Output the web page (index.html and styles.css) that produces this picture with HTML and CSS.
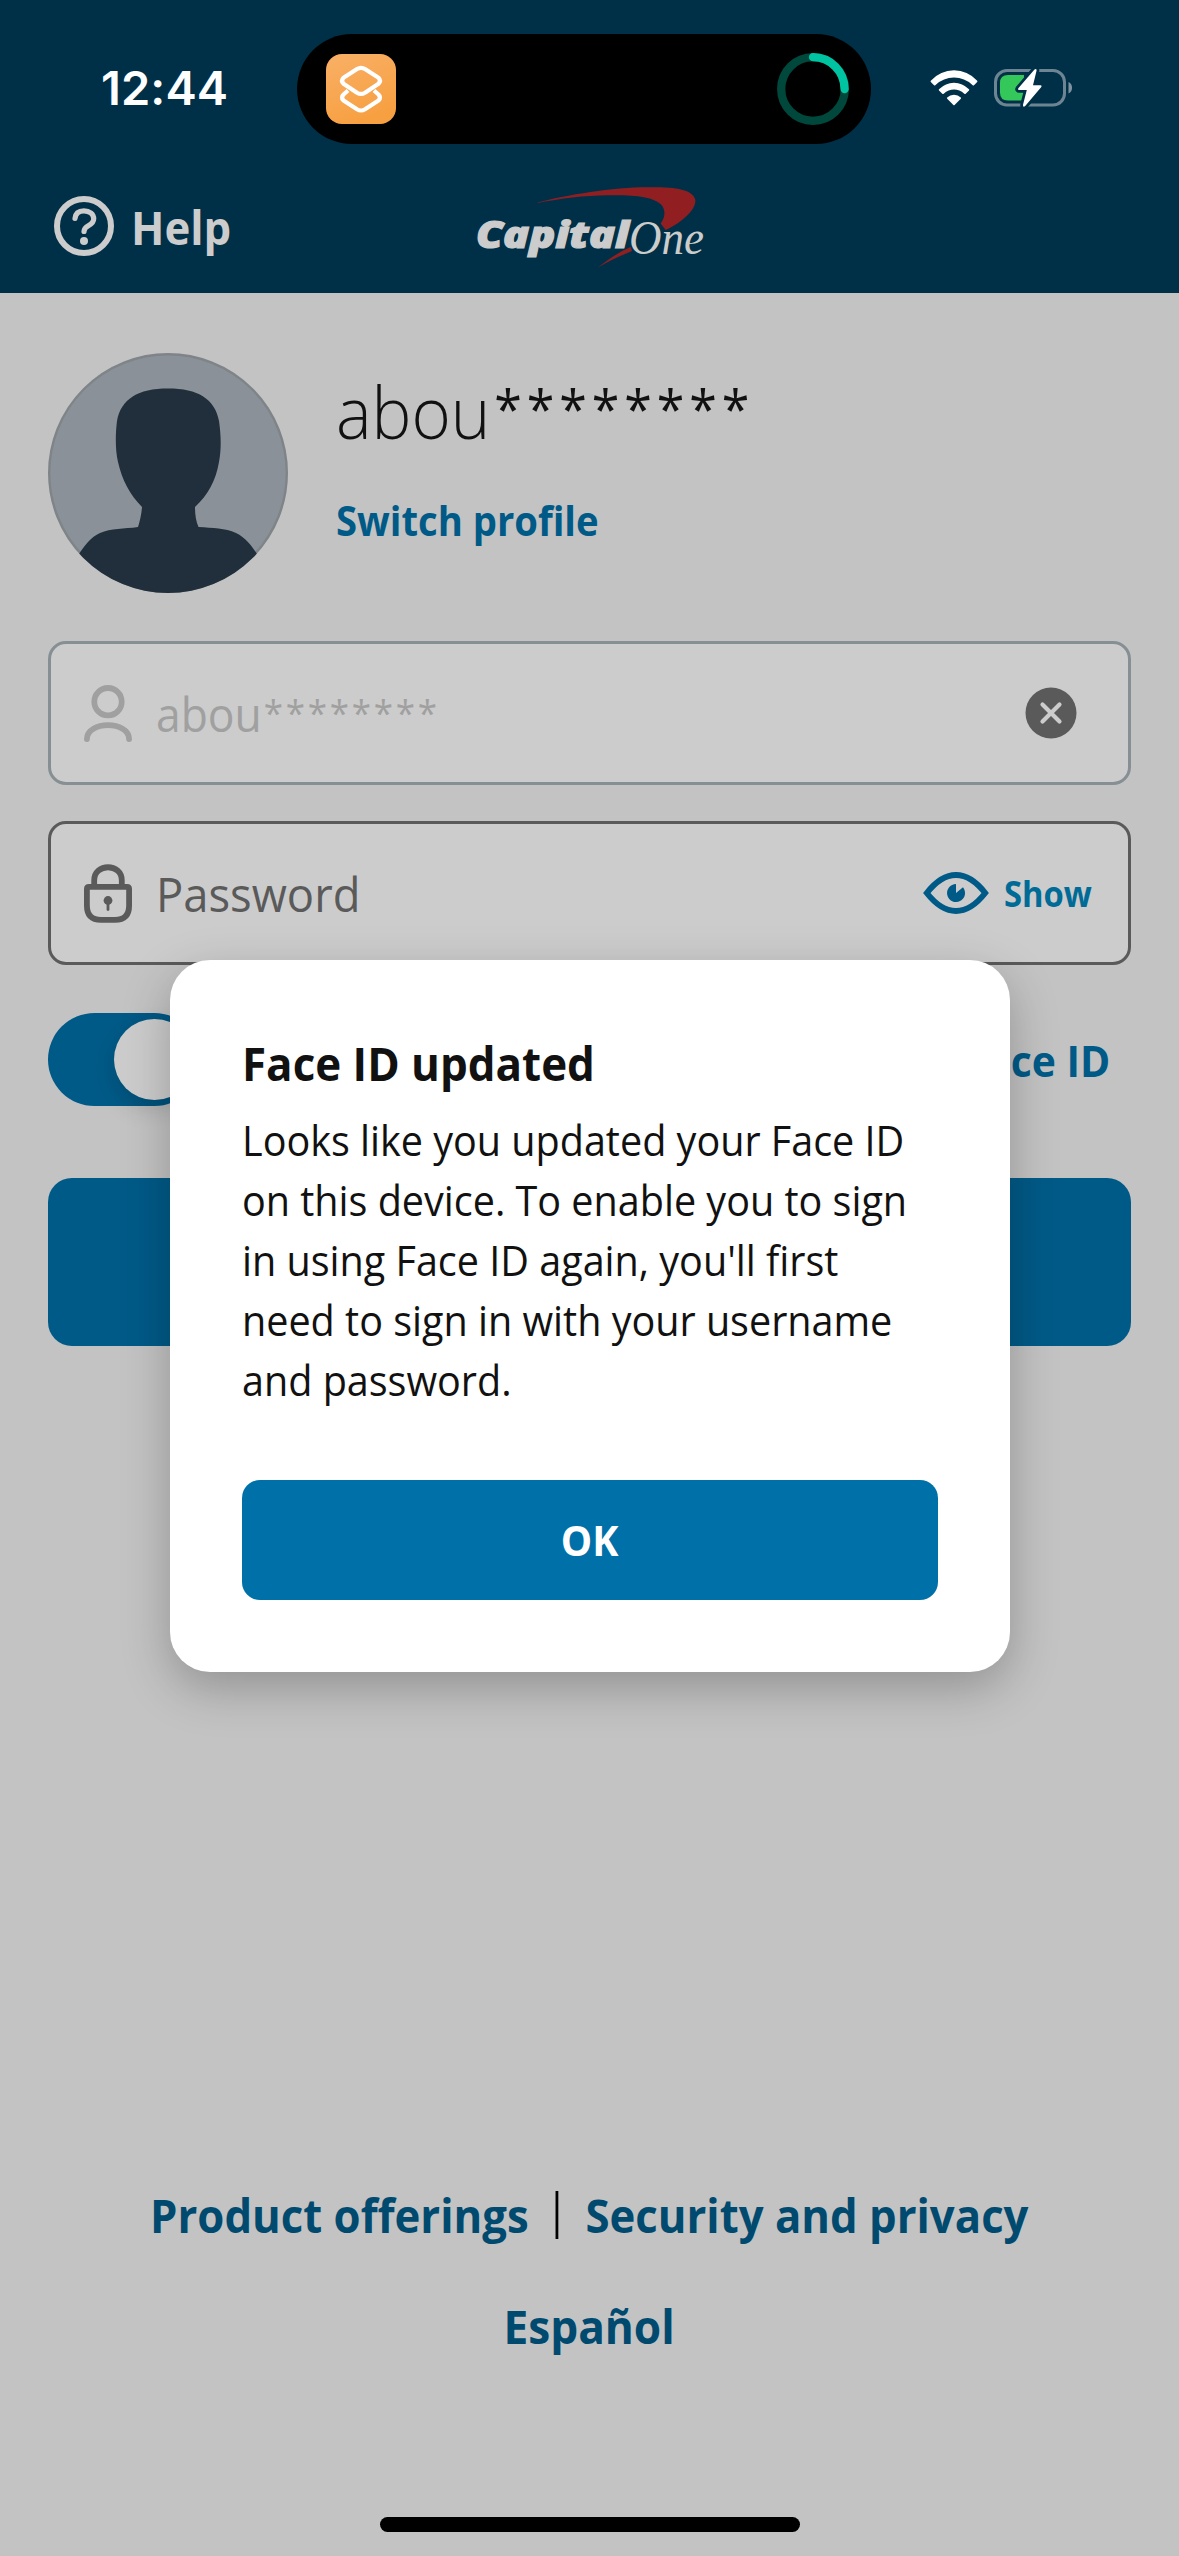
FILE: index.html
```
<!DOCTYPE html>
<html lang="en">
<head>
<meta charset="utf-8">
<title>Sign in</title>
<link rel="stylesheet" href="styles.css">
</head>
<body>
<div class="screen">
  <header class="header">
    <div class="status">
      <span class="status-time">12:44</span>
      <div class="island">
        <svg class="island-app" viewBox="0 0 70 70">
          <defs><linearGradient id="app" x1="0" y1="0" x2=".4" y2="1"><stop offset="0" stop-color="#f9b066"/><stop offset="1" stop-color="#f7a042"/></linearGradient></defs>
          <rect width="70" height="70" rx="16" fill="url(#app)"/>
          <g fill="none" stroke="#fff" stroke-width="4.2" stroke-linejoin="round">
            <path d="M22 36.5 17.500 40.500Q14.500 43.500 17.500 46.500L31 55.300Q35 57.700 39 55.300L52.500 46.500Q55.500 43.500 52.500 40.500L48 36.500"/>
            <path d="M31 15 17.500 23.700Q14.500 26.700 17.500 29.700L31 38.700Q35 41.200 39 38.700L52.500 29.700Q55.500 26.700 52.500 23.700L39 15Q35 12.600 31 15Z"/>
          </g>
        </svg>
        <svg class="island-ring" viewBox="0 0 72 72">
          <circle cx="36" cy="36" r="31.800" fill="none" stroke="#00483b" stroke-width="8.300"/>
          <path d="M36 4.200A31.800 31.800 0 0 1 67.600 36" fill="none" stroke="#00c3a2" stroke-width="8.300" stroke-linecap="round"/>
        </svg>
      </div>
      <svg class="wifi" viewBox="0 0 48 36" fill="#fff">
        <path d="M.8 10.800Q10.500.3 24 .3T47.200 10.800Q47.700 11.500 47.200 12.100L44 15.200Q43.400 15.800 42.700 15.200Q34.500 7.600 24 7.600T5.300 15.200Q4.600 15.800 4 15.200L.8 12.100Q.3 11.500.8 10.800Z"/>
        <path d="M9 19.300Q15.500 12.700 24 12.700T39 19.300Q39.500 19.900 39 20.500L35.700 23.700Q35 24.200 34.300 23.700Q29.600 19.600 24 19.600T13.700 23.700Q13 24.200 12.300 23.700L9 20.500Q8.500 19.900 9 19.300Z"/>
        <path d="M17.200 27.600Q20 24.800 24 24.800T30.800 27.600Q31.300 28.200 30.800 28.800L24.600 35Q24 35.600 23.400 35L17.200 28.800Q16.700 28.200 17.200 27.600Z"/>
      </svg>
      <svg class="battery" viewBox="0 0 80 40">
        <rect x="1.500" y="2.500" width="69" height="34.500" rx="11.500" fill="none" stroke="#6d8593" stroke-width="3"/>
        <path d="M74.500 14v11.500q3.500-1.500 3.500-5.750t-3.500-5.750z" fill="#7f93a0"/>
        <path d="M14 7h16v25.500H14q-8 0-8-8v-9.500q0-8 8-8z" fill="#34c759"/>
        <path d="M40.500 1.500 24.300 20.300Q23.300 22 25 22h7.800l-3.800 14.800q-.2 2.800 2 1.400L47.300 18.900Q48.300 17.300 46.500 17.300H39L42.600 2.500Q42.600.2 40.500 1.500Z" fill="#fff" stroke="#003047" stroke-width="5.500" paint-order="stroke"/>
      </svg>
    </div>
    <nav class="nav">
      <a class="help">
        <svg class="help-icon" viewBox="0 0 60 60" fill="none" stroke="#ccc">
          <circle cx="30" cy="30" r="27" stroke-width="6"/>
          <path d="M21 22.500C21.500 17 25 14.800 30 14.800C35.500 14.800 39.700 18 39.700 22.800C39.700 30.500 30 28.500 30 35.500" stroke-width="5.200" stroke-linecap="round"/>
          <circle cx="30" cy="45" r="4" fill="#ccc" stroke="none"/>
        </svg>
        <span class="help-label">Help</span>
      </a>
      <svg class="logo" viewBox="0 0 240 96" role="img" aria-label="Capital One">
        <path d="M67.700 22.600C95 15 145 7.300 176.700 7.300C205 7 222 9 225.300 19.500C226.500 29 213 42 195.700 50L190.700 43.500C196 36 195 30 192 25.500C184 16 162 14.800 137 15.300C115 15.500 90 18.500 67.700 23Z" fill="#911f22"/>
        <path d="M127.700 87.700C137 80 149 72 160.700 67L162 71C150 76 139 81 127.700 87.700Z" fill="#911f22"/>
        <text class="logo-capital" x="6" y="67.500" textLength="153" lengthAdjust="spacingAndGlyphs">Capital</text>
        <text class="logo-one" x="159" y="74" textLength="75" lengthAdjust="spacingAndGlyphs">One</text>
      </svg>
    </nav>
  </header>

  <main class="main">
    <section class="profile">
      <svg class="avatar" viewBox="0 0 240 240">
        <defs><clipPath id="disc"><circle cx="120" cy="120" r="120"/></clipPath></defs>
        <circle cx="120" cy="120" r="118.800" fill="#8b9198" stroke="#7e8488" stroke-width="2.400"/>
        <path clip-path="url(#disc)" fill="#202f3b" d="M120 35.500C150 35.500 167 46 171 68C173 82 173.500 96 171 109C168 127 160 142 147 154C147 162 148 168 150.500 174C165 175 177 175 188 180C198 185 204 193 209 201L209 240H31V201C36 193 43 184 52 180C63 175 76 176 90 174C92 168 93.500 161 94 154C82 142 74 127 70 109C67 96 67.500 80 69 68C73 46 90 35.500 120 35.500Z"/>
      </svg>
      <div class="profile-info">
        <div class="profile-name"><span class="squeeze">abou<span class="mask">********</span></span></div>
        <a class="switch squeeze">Switch profile</a>
      </div>
    </section>

    <div class="field field-user">
      <svg class="field-icon" viewBox="0 0 48 68" fill="none" stroke="#a0a0a0" stroke-width="5.800" stroke-linecap="round">
        <circle cx="24" cy="22.700" r="13.700"/>
        <path d="M2.900 60C3 41.600 45 41.600 45.100 60"/>
      </svg>
      <span class="field-text squeeze">abou<span class="mask">********</span></span>
      <svg class="clear" viewBox="0 0 52 52">
        <circle cx="26" cy="26" r="25.500" fill="#5a5a5a"/>
        <path d="M17.500 17.500 34.500 34.500M34.500 17.500 17.500 34.500" stroke="#ccc" stroke-width="4.200" stroke-linecap="round"/>
      </svg>
    </div>

    <div class="field field-pass">
      <svg class="field-icon" viewBox="0 0 48 68" fill="none" stroke="#5a5a5a" stroke-width="5.800">
        <path d="M10.200 29V21.500C10.200 3.800 37.800 3.800 37.800 21.500V29"/>
        <path d="M5 27.900H43Q45.100 27.900 45.100 30V46.500Q45.100 60.900 31 60.900H17Q2.900 60.900 2.900 46.500V30Q2.900 27.900 5 27.900Z"/>
        <circle cx="24" cy="41.500" r="4.400" fill="#5a5a5a" stroke="none"/>
        <path d="M24 42V50.500" stroke-width="2.800" stroke-linecap="round"/>
      </svg>
      <span class="field-text squeeze">Password</span>
      <a class="show">
        <svg class="eye" viewBox="0 0 66 42">
          <path d="M3.800 21C12 10.500 22 3 33 3S54 10.500 62.200 21C54 31.500 44 39 33 39S12 31.500 3.800 21Z" fill="none" stroke="#005a87" stroke-width="5.800"/>
          <path d="M33 12A9 9 0 1 0 40 15.300L33 21Z" fill="#005a87"/>
        </svg>
        <span class="show-label">Show</span>
      </a>
    </div>

    <div class="faceid">
      <span class="toggle"><span class="knob"></span></span>
      <span class="faceid-label">Face ID</span>
    </div>

    <div class="signin"></div>

    <footer class="footer">
      <div class="links">
        <a>Product offerings</a>
        <span class="rule"></span>
        <a>Security and privacy</a>
      </div>
      <a class="lang">Español</a>
      <div class="home"></div>
    </footer>
  </main>

  <div class="dialog" role="alertdialog">
    <h1 class="dialog-title">Face ID updated</h1>
    <p class="dialog-text">Looks like you updated your Face ID<br>on this device. To enable you to sign<br>in using Face ID again, you'll first<br>need to sign in with your username<br>and password.</p>
    <button class="ok"><span>OK</span></button>
  </div>
</div>
</body>
</html>
```
FILE: styles.css
```
* { box-sizing: border-box; }

body {
  margin: 0;
  font-family: "Open Sans", "Noto Sans", sans-serif;
}

svg { display: block; flex: none; }

.screen {
  position: relative;
  display: flex;
  flex-direction: column;
  width: 1179px;
  height: 2556px;
  overflow: hidden;
  background: #c3c3c3;
}

.squeeze {
  display: inline-block;
  transform: scaleX(.945);
  transform-origin: left;
}

/* header */
.header {
  height: 293px;
  padding-top: 34px;
  background: #003047;
}

.status {
  display: flex;
  align-items: center;
  height: 110px;
  padding-left: 101px;
}

.status-time {
  width: 196px;
  padding-bottom: 2px;
  color: #fff;
  font: 600 47px/60px Inter, sans-serif;
  letter-spacing: .1px;
}

.island {
  display: flex;
  align-items: center;
  justify-content: space-between;
  width: 574px;
  height: 110px;
  padding: 0 22px 0 29px;
  border-radius: 55px;
  background: #000;
}

.island-app { width: 70px; height: 70px; }
.island-ring { width: 72px; height: 72px; }
.wifi { width: 48px; height: 36px; margin: 0 16px 2px 59px; }
.battery { width: 80px; height: 40px; margin-bottom: 2px; }

.nav {
  display: grid;
  grid-template-columns: 1fr auto 1fr;
  align-items: center;
  height: 98px;
  margin-top: 34px;
}

.help {
  display: flex;
  align-items: center;
  gap: 17px;
  padding: 0 0 2px 54px;
  color: #ccc;
  font-size: 47px;
  font-weight: 700;
  line-height: 60px;
}

.help-icon { width: 60px; height: 60px; }

.help-label {
  padding-top: 1px;
  transform: scaleX(.93);
  transform-origin: left;
}

.logo { width: 240px; height: 96px; margin-top: 2px; }
.logo text { fill: #ccc; }

.logo-capital {
  font: italic 800 36.500px "Open Sans", sans-serif;
  stroke: #ccc;
  stroke-width: 1.200px;
}

.logo-one { font: italic 400 49px "Liberation Serif", serif; }

/* profile */
.main {
  display: flex;
  flex: 1;
  flex-direction: column;
  padding: 60px 48px 24px;
}

.profile {
  display: flex;
  gap: 47px;
  margin-bottom: 48px;
}

.avatar { width: 240px; height: 240px; }

.profile-info {
  display: flex;
  flex-direction: column;
  align-items: flex-start;
  gap: 40px;
  padding-top: 19px;
}

.profile-name {
  height: 80px;
  padding-left: 1px;
  color: #111;
  font-size: 71px;
  font-weight: 300;
  line-height: 80px;
}

.mask { line-height: 0; }

.profile-name .mask {
  margin-left: 4px;
  font-size: 53px;
  font-weight: 400;
  letter-spacing: 5.200px;
  vertical-align: 11px;
}

.switch {
  margin-left: 1px;
  color: #005a87;
  font-size: 42px;
  font-weight: 700;
  line-height: 56px;
  transform: scaleX(.91);
}

/* fields */
.field {
  display: flex;
  align-items: center;
  height: 144px;
  padding: 0 36px 0 33px;
  border: 3px solid;
  border-radius: 18px;
  background: #ccc;
}

.field-user {
  margin-bottom: 36px;
  padding-right: 51px;
  border-color: #868f93;
  color: #a0a0a0;
}

.field-pass { border-color: #5a5a5a; color: #5a5a5a; }

.field-icon { width: 48px; height: 68px; }

.field-text {
  margin: 0 auto 0 24px;
  padding-top: 1px;
  font-size: 47px;
  line-height: 64px;
}

.field-text .mask {
  margin-left: 2px;
  font-size: 37px;
  letter-spacing: 2.900px;
  vertical-align: 6px;
}

.field-pass .field-text { transform: scaleX(.965); }

.clear { width: 52px; height: 52px; }

.show { display: flex; align-items: center; gap: 15px; }
.eye { width: 66px; height: 42px; }

.show-label {
  width: 88px;
  padding-top: 1px;
  color: #006b96;
  font-size: 36px;
  font-weight: 700;
  line-height: 48px;
  transform: scaleX(.91);
  transform-origin: left;
}

/* Face ID row */
.faceid {
  display: flex;
  align-items: center;
  justify-content: space-between;
  height: 93px;
  margin: 48px 0 72px;
  padding-right: 21px;
}

.toggle {
  display: flex;
  align-items: center;
  justify-content: flex-end;
  width: 153px;
  height: 93px;
  padding: 6px;
  border-radius: 47px;
  background: #005a87;
}

.knob {
  width: 81px;
  height: 81px;
  border-radius: 50%;
  background: #ccc;
  box-shadow: 0 9px 24px rgba(0, 0, 0, .15);
}

.faceid-label {
  padding-top: 1px;
  color: #005a87;
  font-size: 43px;
  font-weight: 700;
  transform: scaleX(.95);
  transform-origin: right;
}

.signin {
  height: 168px;
  border-radius: 24px;
  background: #005a87;
}

/* footer */
.footer {
  display: flex;
  flex-direction: column;
  align-items: center;
  margin-top: auto;
  color: #004a70;
  font-size: 47px;
  font-weight: 700;
  line-height: 64px;
}

.links {
  display: flex;
  align-items: center;
  gap: 29px;
  white-space: nowrap;
  transform: scaleX(.93);
}

.rule { width: 3px; height: 48px; background: #000; }

.lang {
  margin: 47px 0 159px;
  transform: scaleX(.94);
}

.home {
  width: 420px;
  height: 15px;
  border-radius: 8px;
  background: #000;
}

/* dialog */
.dialog {
  position: absolute;
  top: 960px;
  left: 170px;
  width: 840px;
  height: 712px;
  padding: 72px;
  border-radius: 40px;
  background: #fff;
  box-shadow: 0 16px 48px rgba(0, 0, 0, .25);
  color: #111;
}

.dialog-title {
  margin: 0 0 16px;
  font-size: 46px;
  font-weight: 700;
  line-height: 62px;
  white-space: nowrap;
  transform: scaleX(.955);
  transform-origin: left;
}

.dialog-text {
  margin: 0 0 70px;
  font-size: 42px;
  line-height: 60px;
  white-space: nowrap;
  transform: scaleX(.941);
  transform-origin: left;
}

.ok {
  display: block;
  width: 696px;
  height: 120px;
  padding: 0;
  border: 0;
  border-radius: 18px;
  background: #0070a9;
  color: #fff;
  font: 700 42px/56px "Open Sans", sans-serif;
}

.ok span {
  display: inline-block;
  transform: scaleX(.94);
}
```
